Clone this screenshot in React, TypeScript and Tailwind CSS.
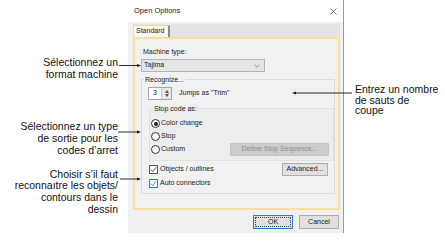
const FONT = { fontFamily: '"Liberation Sans", Arial, sans-serif' };

function Radio({ checked }: { checked?: boolean }) {
  return (
    <span className="w-[9px] h-[9px] rounded-full border border-[#333] bg-white flex items-center justify-center">
      {checked && <span className="w-[4px] h-[4px] rounded-full bg-[#222]" />}
    </span>
  );
}

function Check({ blue }: { blue?: boolean }) {
  const c = blue ? '#2a7ad6' : '#444';
  return (
    <span className={`w-[9px] h-[9px] border bg-white flex items-center justify-center ${blue ? 'border-[#2a7ad6]' : 'border-[#555]'}`}>
      <svg width="7" height="7" viewBox="0 0 7 7">
        <path d="M0.8 3.6 L2.7 5.5 L6.3 1.2" fill="none" stroke={c} strokeWidth="0.9" />
      </svg>
    </span>
  );
}

export default function App() {
  return (
    <div className="relative w-[445px] h-[249px] bg-white flex text-[#111]" style={FONT}>
      {/* left callouts */}
      <div className="w-[128px] pr-[10px] pt-[57px] text-right text-[10.5px] leading-[11.7px] flex flex-col">
        <p>Sélectionnez un<br />format machine</p>
        <p className="mt-[41px]">Sélectionnez un type<br />de sortie pour les<br />codes d’arret</p>
        <p className="mt-[12px]">Choisir s’il faut<br />reconnaıtre les objets/<br />contours dans le<br />dessin</p>
      </div>

      {/* dialog */}
      <div className="w-[216px] h-[233px] flex flex-col border-r border-[#9a9a9a] text-[7px] text-[#1a1a1a]">
        <div className="h-[22px] bg-white flex items-center justify-between pl-[6px] pr-[6px]">
          <span className="text-[7.5px] text-[#222]">Open Options</span>
          <svg width="7" height="7" viewBox="0 0 7 7">
            <path d="M0.5 0.5 L6.5 6.5 M6.5 0.5 L0.5 6.5" stroke="#555" strokeWidth="0.8" />
          </svg>
        </div>
        <div className="flex-1 bg-[#f0f0f0] pl-[5px] pr-[3px] pt-[2px] flex flex-col">
          <div className="h-[13px] bg-[#e4e4e4] flex items-end">
            <div className="h-[12px] w-[37px] bg-[#fbf8ee] border-l border-t border-[#f2d69a] border-r-2 border-r-[#8e8e8e] pl-[2px] flex items-center">
              Standard
            </div>
          </div>
          <div className="h-[173px] border-2 border-[#f7dea6] bg-[#f1f1f1] pt-[8px] flex flex-col">
            <div className="leading-[10px] pl-[8px]">Machine type:</div>
            <div className="mt-[2px] ml-[6px] w-[124px] h-[13px] bg-[#e5e5e5] border border-[#b4b4b4] flex items-center justify-between pl-[2px] pr-[4px]">
              <span>Tajima</span>
              <svg width="6" height="4" viewBox="0 0 6 4">
                <path d="M0.5 0.8 L3 3.2 L5.5 0.8" fill="none" stroke="#777" strokeWidth="0.7" />
              </svg>
            </div>
            <fieldset className="mt-[3px] ml-[6px] w-[194px] h-[119px] border border-[#dcdcdc] flex flex-col">
              <legend className="ml-[2px] px-[1px] leading-[9px]">Recognize...</legend>
              <div className="mt-[3px] ml-[6px] flex items-center h-[13px]">
                <div className="w-[24px] h-[13px] border border-[#a8a8a8] bg-white flex">
                  <span className="w-[12px] flex items-center justify-center">3</span>
                  <span className="flex-1 bg-[#e8e8e8] border-l border-[#c8c8c8] flex flex-col items-center justify-center gap-[1px]">
                    <svg width="4" height="3" viewBox="0 0 4 3"><path d="M0 3 L2 0 L4 3 Z" fill="#555" /></svg>
                    <svg width="4" height="3" viewBox="0 0 4 3"><path d="M0 0 L2 3 L4 0 Z" fill="#555" /></svg>
                  </span>
                </div>
                <span className="ml-[7px]">Jumps as "Trim"</span>
              </div>
              <fieldset className="mt-[4px] ml-[7px] w-[185px] h-[57px] border border-[#e0e0e0] bg-[#ededed] flex flex-col">
                <legend className="ml-[3px] px-[1px] leading-[9px]">Stop code as:</legend>
                <div className="mt-[4px] h-[13px] flex items-center gap-[1px] pl-[1px]">
                  <Radio checked /> <span>Color change</span>
                </div>
                <div className="h-[13px] flex items-center gap-[1px] pl-[1px]">
                  <Radio /> <span>Stop</span>
                </div>
                <div className="h-[13px] flex items-center justify-between pl-[1px] pr-[4px]">
                  <span className="flex items-center gap-[1px]"><Radio /> <span>Custom</span></span>
                  <span className="w-[99px] h-[13px] bg-[#cccccc] border border-[#c4c4c4] text-[#8f8f8f] flex items-center justify-center">
                    Define Stop Sequence...
                  </span>
                </div>
              </fieldset>
              <div className="mt-[2px] h-[13px] flex items-center justify-between ml-[7px] mr-[6px]">
                <span className="flex items-center gap-[2px]"><Check /> <span>Objects / outlines</span></span>
                <span className="w-[46px] h-[13px] bg-[#e1e1e1] border border-[#adadad] flex items-center justify-center">Advanced...</span>
              </div>
              <div className="mt-[1px] h-[13px] flex items-center gap-[2px] ml-[7px]">
                <Check blue /> <span>Auto connectors</span>
              </div>
            </fieldset>
          </div>
          <div className="mt-[5px] h-[14px] flex justify-end gap-[6px] pr-[1px]">
            <span className="w-[40px] h-[14px] bg-[#e1e1e1] border border-[#2f7ad0] outline-1 outline-dotted outline-offset-[-3px] outline-[#444] flex items-center justify-center">OK</span>
            <span className="w-[40px] h-[14px] bg-[#e1e1e1] border border-[#adadad] flex items-center justify-center">Cancel</span>
          </div>
        </div>
      </div>

      {/* right callout */}
      <div className="flex-1 pl-[11px] pt-[84px] text-[10.5px] leading-[10.5px]">
        <p>Entrez un nombre<br />de sauts de<br />coupe</p>
      </div>

      {/* callout leader lines */}
      <svg className="absolute inset-0 pointer-events-none" width="445" height="249" viewBox="0 0 445 249">
        <g stroke="#111" strokeWidth="0.9">
          <line x1="119" y1="65.5" x2="138" y2="65.5" />
          <line x1="118" y1="132" x2="138" y2="132" />
          <line x1="120" y1="179" x2="138" y2="179" />
          <line x1="296" y1="93" x2="352" y2="93" />
        </g>
        <g fill="#111">
          <path d="M141 65.5 L137 64 L137 67 Z" />
          <path d="M141 132 L137 130.5 L137 133.5 Z" />
          <path d="M141 179 L137 177.5 L137 180.5 Z" />
          <path d="M292 93 L296 91.5 L296 94.5 Z" />
        </g>
      </svg>
    </div>
  );
}
